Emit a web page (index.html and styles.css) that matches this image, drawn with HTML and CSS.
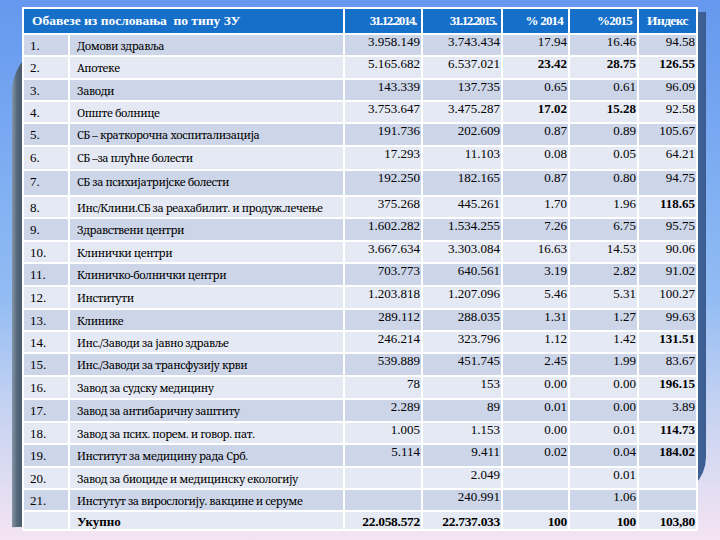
FILE: index.html
```html
<!DOCTYPE html>
<html>
<head>
<meta charset="utf-8">
<link rel="stylesheet" href="styles.css">
</head>
<body>
<div class="stage">
  <div class="shadow"></div>
  <table class="grid">
    <colgroup>
      <col class="c1"><col class="c2"><col class="c3"><col class="c4"><col class="c5"><col class="c6"><col class="c7">
    </colgroup>
    <thead>
      <tr class="head">
        <th colspan="2" class="title">Обавезе из пословања&nbsp; по типу ЗУ</th>
        <th class="hn date">31.12.2014.</th>
        <th class="hn date">31.12.2015.</th>
        <th class="hn pct">% 2014</th>
        <th class="hn pct">%2015</th>
        <th class="hn idx">Индекс</th>
      </tr>
    </thead>
    <tbody>
      <tr class="d h20"><td class="no">1.</td><td class="nm">Домови здравља</td><td class="n">3.958.149</td><td class="n">3.743.434</td><td class="n">17.94</td><td class="n">16.46</td><td class="n">94.58</td></tr>
      <tr class="l h21"><td class="no">2.</td><td class="nm">Апотеке</td><td class="n">5.165.682</td><td class="n">6.537.021</td><td class="n b">23.42</td><td class="n b">28.75</td><td class="n b">126.55</td></tr>
      <tr class="d h20"><td class="no">3.</td><td class="nm">Заводи</td><td class="n">143.339</td><td class="n">137.735</td><td class="n">0.65</td><td class="n">0.61</td><td class="n">96.09</td></tr>
      <tr class="l h20"><td class="no">4.</td><td class="nm">Опште болнице</td><td class="n">3.753.647</td><td class="n">3.475.287</td><td class="n b">17.02</td><td class="n b">15.28</td><td class="n">92.58</td></tr>
      <tr class="d h21"><td class="no">5.</td><td class="nm">СБ – краткорочна хоспитализација</td><td class="n">191.736</td><td class="n">202.609</td><td class="n">0.87</td><td class="n">0.89</td><td class="n">105.67</td></tr>
      <tr class="l h22"><td class="no">6.</td><td class="nm">СБ –за плућне болести</td><td class="n">17.293</td><td class="n">11.103</td><td class="n">0.08</td><td class="n">0.05</td><td class="n">64.21</td></tr>
      <tr class="d h24"><td class="no">7.</td><td class="nm">СБ за психијатријске болести</td><td class="n">192.250</td><td class="n">182.165</td><td class="n">0.87</td><td class="n">0.80</td><td class="n">94.75</td></tr>
      <tr class="l h20"><td class="no">8.</td><td class="nm">Инс/Клини.СБ за реахабилит. и продуж.лечење</td><td class="n">375.268</td><td class="n">445.261</td><td class="n">1.70</td><td class="n">1.96</td><td class="n b">118.65</td></tr>
      <tr class="d h21"><td class="no">9.</td><td class="nm">Здравствени центри</td><td class="n">1.602.282</td><td class="n">1.534.255</td><td class="n">7.26</td><td class="n">6.75</td><td class="n">95.75</td></tr>
      <tr class="l h20"><td class="no">10.</td><td class="nm">Клинички центри</td><td class="n">3.667.634</td><td class="n">3.303.084</td><td class="n">16.63</td><td class="n">14.53</td><td class="n">90.06</td></tr>
      <tr class="d h21"><td class="no">11.</td><td class="nm">Клиничко-болнички центри</td><td class="n">703.773</td><td class="n">640.561</td><td class="n">3.19</td><td class="n">2.82</td><td class="n">91.02</td></tr>
      <tr class="l h21"><td class="no">12.</td><td class="nm">Институти</td><td class="n">1.203.818</td><td class="n">1.207.096</td><td class="n">5.46</td><td class="n">5.31</td><td class="n">100.27</td></tr>
      <tr class="d h20"><td class="no">13.</td><td class="nm">Клинике</td><td class="n">289.112</td><td class="n">288.035</td><td class="n">1.31</td><td class="n">1.27</td><td class="n">99.63</td></tr>
      <tr class="l h20"><td class="no">14.</td><td class="nm">Инс./Заводи за јавно здравље</td><td class="n">246.214</td><td class="n">323.796</td><td class="n">1.12</td><td class="n">1.42</td><td class="n b">131.51</td></tr>
      <tr class="d h21"><td class="no">15.</td><td class="nm">Инс./Заводи за трансфузију крви</td><td class="n">539.889</td><td class="n">451.745</td><td class="n">2.45</td><td class="n">1.99</td><td class="n">83.67</td></tr>
      <tr class="l h21"><td class="no">16.</td><td class="nm">Завод за судску медицину</td><td class="n">78</td><td class="n">153</td><td class="n">0.00</td><td class="n">0.00</td><td class="n b">196.15</td></tr>
      <tr class="d h21"><td class="no">17.</td><td class="nm">Завод за антибаричну заштиту</td><td class="n">2.289</td><td class="n">89</td><td class="n">0.01</td><td class="n">0.00</td><td class="n">3.89</td></tr>
      <tr class="l h20"><td class="no">18.</td><td class="nm">Завод за псих. порем. и говор. пат.</td><td class="n">1.005</td><td class="n">1.153</td><td class="n">0.00</td><td class="n">0.01</td><td class="n b">114.73</td></tr>
      <tr class="d h21"><td class="no">19.</td><td class="nm">Институт за медицину рада Срб.</td><td class="n">5.114</td><td class="n">9.411</td><td class="n">0.02</td><td class="n">0.04</td><td class="n b">184.02</td></tr>
      <tr class="l h20"><td class="no">20.</td><td class="nm">Завод за биоциде и медицинску екологију</td><td class="n"></td><td class="n">2.049</td><td class="n"></td><td class="n">0.01</td><td class="n"></td></tr>
      <tr class="d h20"><td class="no">21.</td><td class="nm">Инстутут за вирослогију. вакцине и серуме</td><td class="n"></td><td class="n">240.991</td><td class="n"></td><td class="n">1.06</td><td class="n"></td></tr>
      <tr class="l h18 total"><td class="no"></td><td class="nm nb">Укупно</td><td class="n b">22.058.572</td><td class="n b">22.737.033</td><td class="n b">100</td><td class="n b">100</td><td class="n b">103,80</td></tr>
    </tbody>
  </table>
</div>
</body>
</html>
```

FILE: styles.css
```css
html, body {
  margin: 0;
  padding: 0;
}
body {
  width: 720px;
  height: 540px;
  overflow: hidden;
  background: linear-gradient(to bottom, #6598ee 0%, #7cacf2 30%, #92bcf3 55%, #c4d2f2 75%, #f4e4f2 100%);
  font-family: "Liberation Serif", "Noto Serif", serif;
}
.stage {
  position: relative;
  padding: 7px 0 0 22px;
}
.shadow {
  position: absolute;
  left: 12px;
  top: 27px;
  width: 694px;
  height: 485px;
  transform: skewY(-2.5deg);
  border-radius: 50px 0 40px 0;
  background: linear-gradient(to right, #8596a8 0px, #566879 5px, #4a5b6d 10px, #4b6285 50%, #45679f 98%, #3c5c90 100%);
  z-index: 0;
}
.grid {
  position: relative;
  z-index: 1;
  table-layout: fixed;
  width: 676px;
  border-collapse: separate;
  border-spacing: 2px;
  background: #ffffff;
  color: #000;
}
.c1 { width: 44px; }
.c2 { width: 273px; }
.c3 { width: 76px; }
.c4 { width: 78px; }
.c5 { width: 65px; }
.c6 { width: 67px; }
.c7 { width: 57px; }

th, td {
  padding: 0;
  vertical-align: top;
  overflow: hidden;
  white-space: nowrap;
  box-sizing: border-box;
}
.head { height: 24px; }
.head th {
  background: #1670c9;
  color: #ffffff;
  font-weight: bold;
  vertical-align: middle;
  line-height: 16px;
}
.title {
  text-align: left;
  font-size: 13.5px;
  padding-left: 8px;
}
.hn {
  text-align: right;
  font-size: 13px;
  padding-right: 5px;
}
.date { letter-spacing: -1.4px; }
.pct { letter-spacing: -0.8px; }
.idx { letter-spacing: -0.6px; font-size: 13.5px; padding-right: 8px; }

.d td { background: #cdd5e9; }
.l td { background: #e5e9f4; }

.h18 { height: 17px; }
.h20 { height: 20px; }
.h21 { height: 21px; }
.h22 { height: 22px; }
.h24 { height: 24px; }

td {
  font-size: 13px;
  line-height: 14px;
}
.no {
  padding: 4px 0 0 6px;
}
.nm {
  padding: 4px 0 0 7px;
  font-family: "Noto Serif", "DejaVu Serif", serif;
  font-size: 11px;
  letter-spacing: -0.4px;
}
.n {
  text-align: right;
  padding: 0 1px 0 0;
}
.b { font-weight: bold; }
.nb {
  font-family: "Liberation Serif", serif;
  font-weight: bold;
  font-size: 13px;
  letter-spacing: 0;
}
.total .n { padding-top: 3px; font-size: 13.5px; letter-spacing: -0.3px; }
.total .nm { padding-top: 3px; }
```
